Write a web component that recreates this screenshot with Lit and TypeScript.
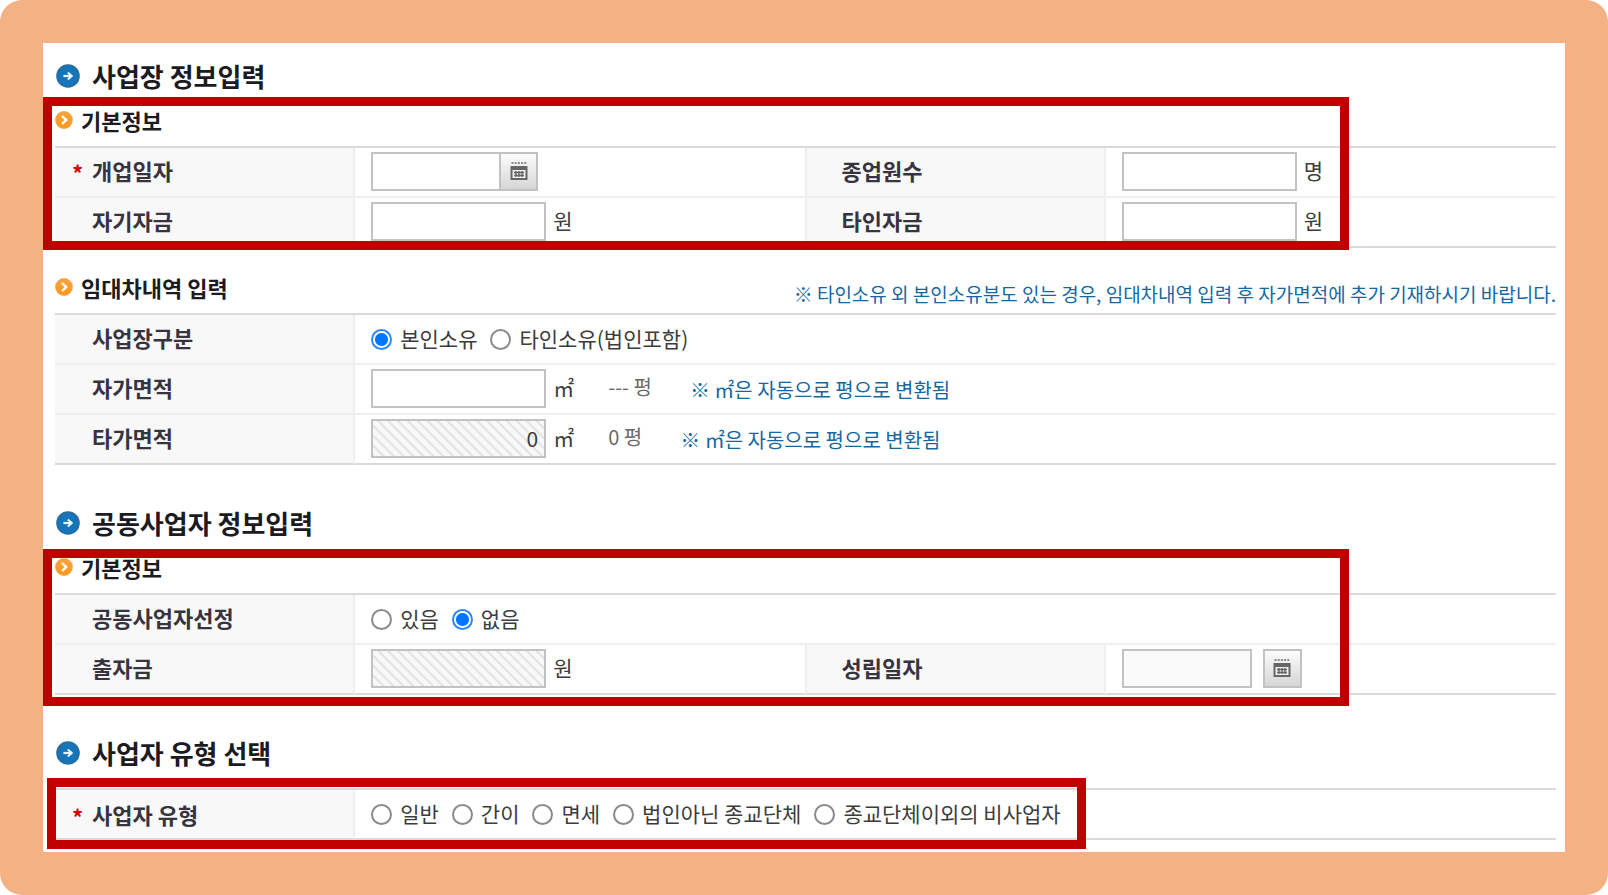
import { LitElement, html, css } from "lit";
import { customElement, property } from "lit/decorators.js";

@customElement("section-icon")
class SectionIcon extends LitElement {
  static styles = css`
    :host { display: block; flex: none; width: 24px; height: 24px; }
    svg { display: block; }
  `;
  render() {
    return html`<svg width="24" height="24" viewBox="0 0 24 24" aria-hidden="true">
      <circle cx="12" cy="12" r="11.8" fill="#2a6c9b" />
      <circle cx="12" cy="12.4" r="10.2" fill="#1475bb" />
      <path d="M7.4 12h8" fill="none" stroke="#e8f4fc" stroke-width="2.2" />
      <path d="M11.8 8.4l4 3.6-4 3.6" fill="none" stroke="#e8f4fc" stroke-width="2" />
    </svg>`;
  }
}

@customElement("sub-icon")
class SubIcon extends LitElement {
  static styles = css`
    :host { display: block; flex: none; width: 18px; height: 18px; }
    svg { display: block; }
  `;
  render() {
    return html`<svg width="18" height="18" viewBox="0 0 18 18" aria-hidden="true">
      <defs>
        <linearGradient id="g" x1="0" y1="0" x2="0" y2="1">
          <stop offset="0" stop-color="#f3a440" /><stop offset="1" stop-color="#ff9816" />
        </linearGradient>
      </defs>
      <circle cx="9" cy="9" r="8.9" fill="#f0a548" />
      <circle cx="9" cy="9" r="7.8" fill="url(#g)" />
      <path d="M7 5l4.2 4L7 13" fill="none" stroke="#fff" stroke-width="2.4" />
    </svg>`;
  }
}

@customElement("date-button")
class DateButton extends LitElement {
  @property() name = "";
  static styles = css`
    :host { display: block; flex: none; }
    button {
      display: grid; place-items: center; box-sizing: border-box;
      width: 39px; height: 39px; padding: 0;
      border: 2px solid #c2c2c2;
      background: linear-gradient(#fcfcfc, #d6d6d6);
    }
  `;
  render() {
    return html`<button type="button" aria-label=${this.name}>
      <svg width="18" height="20" viewBox="0 0 18 20" aria-hidden="true">
        <path d="M1.5 2h15" stroke="#8a8a8a" stroke-width="2" stroke-dasharray="2 1.2" />
        <path d="M.5 5h17v14H.5z" fill="#666" />
        <path d="M2.5 9h13v8h-13z" fill="#ededed" />
        <path d="M4 11.5h10M4 14.5h10M6 10v6M9 10v6M12 10v6" stroke="#666" stroke-width="1.4" />
      </svg>
    </button>`;
  }
}

type Choice = { label: string; checked?: boolean };

@customElement("app-root")
class AppRoot extends LitElement {
  static styles = css`
    :host {
      display: block;
      font-family: "Noto Sans CJK KR", sans-serif;
      font-size: 21px;
      line-height: 28px;
      color: #3c3c3c;
    }
    * { box-sizing: border-box; }
    .frame {
      min-height: 100vh;
      padding: 43px;
      background: #f4b183;
      border-radius: 22px;
    }
    .page { background: #fff; padding: 15px 9px 12px 12px; }
    h2, h3 { display: flex; align-items: center; margin: 0; color: #1c1a22; font-weight: 700; }
    h2 { gap: 12px; font-size: 26px; line-height: 36px; margin-top: 40px; padding-left: 1px; }
    h2:first-child { margin-top: 0; }
    h3 { gap: 8px; font-size: 22px; line-height: 26px; }
    .group { position: relative; margin-top: 13px; }
    .group.next { margin-top: 26px; }
    .group.bare { margin-top: 17px; }
    .head { display: flex; align-items: flex-start; justify-content: space-between; margin-bottom: 11px; height: 28px; }
    .head p { margin: 6px 0 0; font-size: 19px; color: #15689f; white-space: nowrap; }
    .mark {
      position: absolute; pointer-events: none;
      border: 9px solid #c00000;
      left: -12px; width: 87%; top: -10px; bottom: -2px;
    }
    .mark.low { top: -5px; bottom: -11px; }
    .mark.type { left: -8px; right: 31%; width: auto; top: -10px; bottom: -9px; margin-right: 5px; }
    table { width: 100%; table-layout: fixed; border-collapse: separate; border-spacing: 0; border-top: 2px solid #dadada; }
    .w-label { width: 20%; }
    .w-field { width: 30%; }
    th, td { height: 50px; padding: 0; border-bottom: 2px solid #efefef; text-align: left; }
    tr:last-child > * { border-bottom-color: #dadada; }
    th {
      background: #f8f8f8; border-right: 2px solid #efefef;
      font-size: 22px; font-weight: 700; color: #37333f;
    }
    td + th { border-left: 2px solid #efefef; }
    .label { display: flex; align-items: center; padding: 0 0 4px 17px; }
    .bare .label { padding-bottom: 0; }
    td + th .label { padding-left: 14px; }
    .star { width: 20px; flex: none; color: #d40000; padding-top: 4px; }
    .cell { display: flex; align-items: center; padding: 0 0 2px 16px; }
    .text {
      width: 175px; height: 39px; flex: none; margin: 0; padding: 0 6px;
      border: 2px solid #c2c2c2; border-radius: 0; background: #fff;
      font: inherit; color: #3c3c3c; text-align: right;
    }
    .text.date { width: 130px; margin-right: -2px; }
    .text.plain { background: #fafafa; margin-right: 11px; }
    .text.off { background: repeating-linear-gradient(45deg, #e2e2e2 0 1px, #f8f8f8 2px 6px, #e2e2e2 7px); }
    .unit { margin-left: 7px; padding-bottom: 3px; white-space: nowrap; }
    .area { margin-left: 34px; padding-bottom: 3px; white-space: nowrap; color: #6a6a6a; font-size: 20px; }
    .hint { margin-left: 38px; padding-top: 3px; white-space: nowrap; color: #15689f; font-size: 20px; }
    .radios { gap: 13px; padding-bottom: 0; }
    .radio { display: flex; align-items: center; gap: 8px; white-space: nowrap; }
    .radio span { padding-bottom: 3px; }
    .radio input {
      appearance: none; width: 21px; height: 21px; margin: 0; flex: none;
      border: 2px solid #8a8a8a; border-radius: 50%; background: #fff;
    }
    .radio input:checked {
      border-color: #2b87ff;
      background: radial-gradient(circle, #0075ff 0 6px, #fff 7px);
    }
  `;

  private label(text: string, id = "", required = false) {
    return html`<th scope="row"><div class="label">
      <span class="star">${required ? "*" : ""}</span>
      ${id ? html`<label for=${id}>${text}</label>` : html`<span>${text}</span>`}
    </div></th>`;
  }

  private radios(name: string, title: string, choices: Choice[]) {
    return html`<div class="cell radios" role="radiogroup" aria-label=${title}>
      ${choices.map((c) => html`<label class="radio">
        <input type="radio" name=${name} ?checked=${c.checked} /><span>${c.label}</span>
      </label>`)}
    </div>`;
  }

  private cols() {
    return html`<colgroup>
      <col class="w-label" /><col class="w-field" /><col class="w-label" /><col class="w-field" />
    </colgroup>`;
  }

  render() {
    return html`<main class="frame"><form class="page">
      <h2><section-icon></section-icon>사업장 정보입력</h2>
      <section class="group">
        <div class="head"><h3><sub-icon></sub-icon>기본정보</h3></div>
        <table>
          ${this.cols()}
          <tbody>
            <tr>
              ${this.label("개업일자", "open", true)}
              <td><div class="cell">
                <input class="text date" id="open" type="text" />
                <date-button name="개업일자"></date-button>
              </div></td>
              ${this.label("종업원수", "staff")}
              <td><div class="cell"><input class="text" id="staff" type="text" /><span class="unit">명</span></div></td>
            </tr>
            <tr>
              ${this.label("자기자금", "own")}
              <td><div class="cell"><input class="text" id="own" type="text" /><span class="unit">원</span></div></td>
              ${this.label("타인자금", "other")}
              <td><div class="cell"><input class="text" id="other" type="text" /><span class="unit">원</span></div></td>
            </tr>
          </tbody>
        </table>
        <div class="mark"></div>
      </section>

      <section class="group next">
        <div class="head">
          <h3><sub-icon></sub-icon>임대차내역 입력</h3>
          <p>※ 타인소유 외 본인소유분도 있는 경우, 임대차내역 입력 후 자가면적에 추가 기재하시기 바랍니다.</p>
        </div>
        <table>
          ${this.cols()}
          <tbody>
            <tr>
              ${this.label("사업장구분")}
              <td colspan="3">${this.radios("place", "사업장구분", [
                { label: "본인소유", checked: true },
                { label: "타인소유(법인포함)" },
              ])}</td>
            </tr>
            <tr>
              ${this.label("자가면적", "area-own")}
              <td colspan="3"><div class="cell">
                <input class="text" id="area-own" type="text" /><span class="unit">㎡</span>
                <span class="area">--- 평</span><span class="hint">※ ㎡은 자동으로 평으로 변환됨</span>
              </div></td>
            </tr>
            <tr>
              ${this.label("타가면적", "area-rent")}
              <td colspan="3"><div class="cell">
                <input class="text off" id="area-rent" type="text" value="0" readonly /><span class="unit">㎡</span>
                <span class="area">0 평</span><span class="hint">※ ㎡은 자동으로 평으로 변환됨</span>
              </div></td>
            </tr>
          </tbody>
        </table>
      </section>

      <h2><section-icon></section-icon>공동사업자 정보입력</h2>
      <section class="group">
        <div class="head"><h3><sub-icon></sub-icon>기본정보</h3></div>
        <table>
          ${this.cols()}
          <tbody>
            <tr>
              ${this.label("공동사업자선정")}
              <td colspan="3">${this.radios("joint", "공동사업자선정", [
                { label: "있음" },
                { label: "없음", checked: true },
              ])}</td>
            </tr>
            <tr>
              ${this.label("출자금", "invest")}
              <td><div class="cell"><input class="text off" id="invest" type="text" readonly /><span class="unit">원</span></div></td>
              ${this.label("성립일자", "formed")}
              <td><div class="cell">
                <input class="text date plain" id="formed" type="text" readonly />
                <date-button name="성립일자"></date-button>
              </div></td>
            </tr>
          </tbody>
        </table>
        <div class="mark low"></div>
      </section>

      <h2><section-icon></section-icon>사업자 유형 선택</h2>
      <section class="group bare">
        <table>
          ${this.cols()}
          <tbody>
            <tr>
              ${this.label("사업자 유형", "", true)}
              <td colspan="3">${this.radios("type", "사업자 유형", [
                { label: "일반" },
                { label: "간이" },
                { label: "면세" },
                { label: "법인아닌 종교단체" },
                { label: "종교단체이외의 비사업자" },
              ])}</td>
            </tr>
          </tbody>
        </table>
        <div class="mark type"></div>
      </section>
    </form></main>`;
  }
}
